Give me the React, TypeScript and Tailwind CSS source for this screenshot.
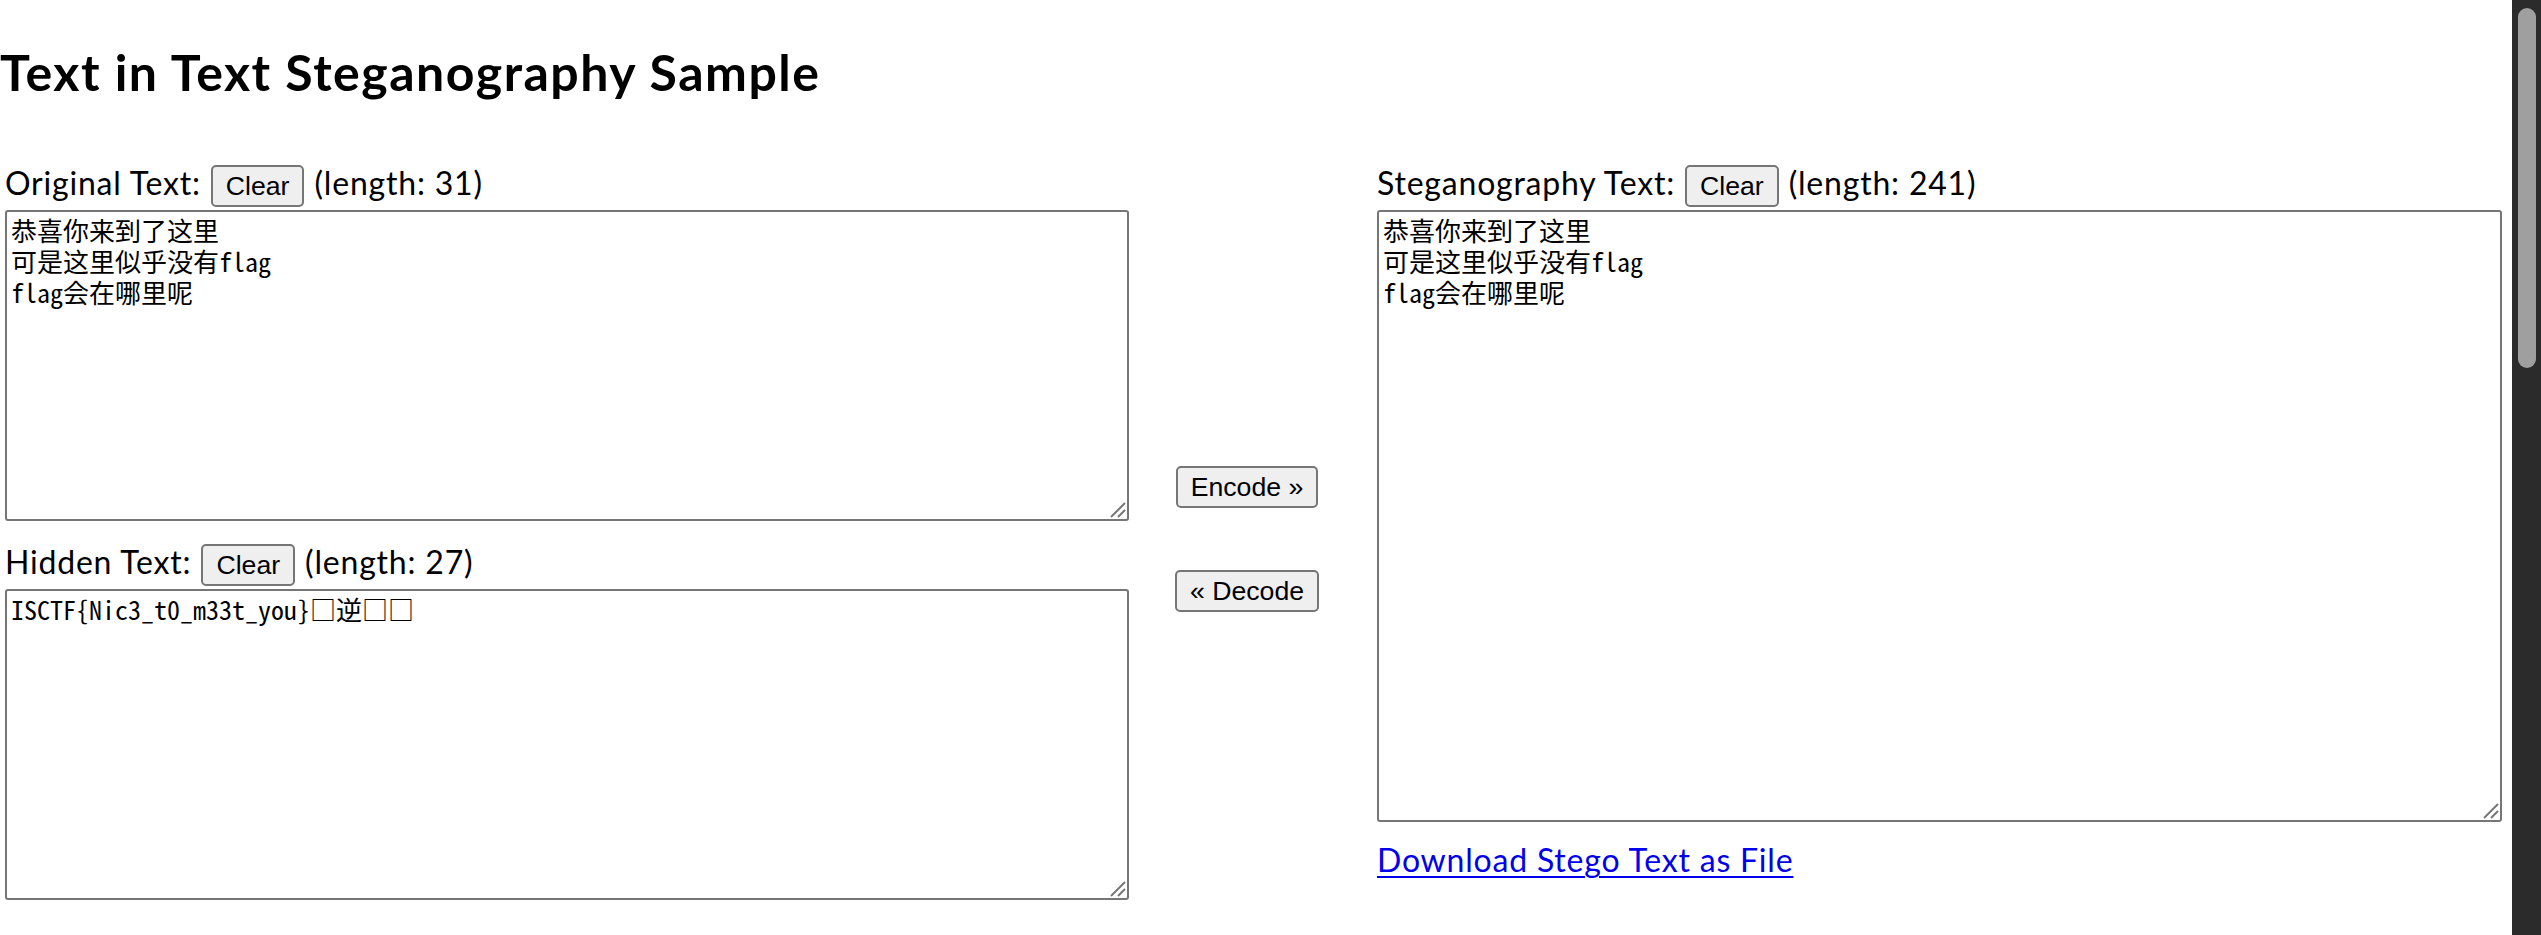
import React from "react";

const labelFont = { fontFamily: "Lato, 'Noto Sans CJK JP', sans-serif" };
const monoFont = {
  fontFamily: "'Noto Sans Mono CJK JP', 'Noto Sans CJK JP', monospace",
};
const buttonFont = { fontFamily: "'Liberation Sans', Arial, sans-serif" };

function NativeButton({ children }: { children: React.ReactNode }) {
  return (
    <button
      type="button"
      style={buttonFont}
      className="h-[42px] rounded-[5px] border-2 border-[#767676] bg-[#efefef] px-[13px] text-[26.67px] font-normal leading-[32px] tracking-normal text-black"
    >
      {children}
    </button>
  );
}

function Grip() {
  return (
    <svg
      className="pointer-events-none absolute bottom-[2px] right-[2px]"
      width="18"
      height="18"
      viewBox="0 0 18 18"
    >
      <path d="M2 16 L16 2" stroke="#767676" strokeWidth="2" />
      <path d="M9 16 L16 9" stroke="#767676" strokeWidth="2" />
    </svg>
  );
}

function TextBox({ value, height }: { value: string; height: string }) {
  return (
    <div className={`relative ${height}`}>
      <textarea
        defaultValue={value}
        spellCheck={false}
        style={monoFont}
        className="block h-full w-full resize-none rounded-[3px] border-2 border-[#767676] bg-white px-[4px] pt-[2px] text-[26px] leading-[31px] text-black outline-none"
      />
      <Grip />
    </div>
  );
}

function FieldLabel({ title, length }: { title: string; length: number }) {
  return (
    <div
      style={labelFont}
      className="flex h-[42px] items-baseline gap-[10px] text-[32px] font-normal leading-[38px] tracking-[0.8px] text-black"
    >
      <span>{title}</span>
      <NativeButton>Clear</NativeButton>
      <span>(length: {length})</span>
    </div>
  );
}

export default function App() {
  const original = "恭喜你来到了这里\n可是这里似乎没有flag\nflag会在哪里呢";
  const hidden = "ISCTF{Nic3_t0_m33t_you}□逆□□";

  return (
    <div className="flex h-screen overflow-hidden bg-white">
      <main className="flex-1">
        <h1
          style={labelFont}
          className="pt-[42px] text-[50px] font-bold leading-[60px] tracking-[1.5px] text-black"
        >
          Text in Text Steganography Sample
        </h1>

        <div className="mt-[62px] flex pl-[5px]">
          {/* source column */}
          <section className="w-[1124px]">
            <FieldLabel title="Original Text:" length={31} />
            <div className="mt-[4px]">
              <TextBox value={original} height="h-[311px]" />
            </div>
            <div className="mt-[22px]">
              <FieldLabel title="Hidden Text:" length={27} />
            </div>
            <div className="mt-[4px]">
              <TextBox value={hidden} height="h-[311px]" />
            </div>
          </section>

          {/* action buttons */}
          <section className="flex w-[248px] flex-col items-center pr-[12px] pt-[302px]">
            <NativeButton>Encode »</NativeButton>
            <div className="mt-[62px]">
              <NativeButton>« Decode</NativeButton>
            </div>
          </section>

          {/* result column */}
          <section className="w-[1125px]">
            <FieldLabel title="Steganography Text:" length={241} />
            <div className="mt-[4px]">
              <TextBox value={original} height="h-[612px]" />
            </div>
            <div className="mt-[20px]">
              <a
                href="#"
                style={labelFont}
                className="text-[32px] font-normal leading-[36px] tracking-[0.8px] text-[#0000ee] underline decoration-2 underline-offset-[4px]"
              >
                Download Stego Text as File
              </a>
            </div>
          </section>
        </div>
      </main>

      {/* page scrollbar */}
      <div className="w-[29px] shrink-0 bg-[#2b2b2b] pl-[6px] pt-[8px]">
        <div className="h-[360px] w-[18px] rounded-full bg-[#9f9f9f]" />
      </div>
    </div>
  );
}
